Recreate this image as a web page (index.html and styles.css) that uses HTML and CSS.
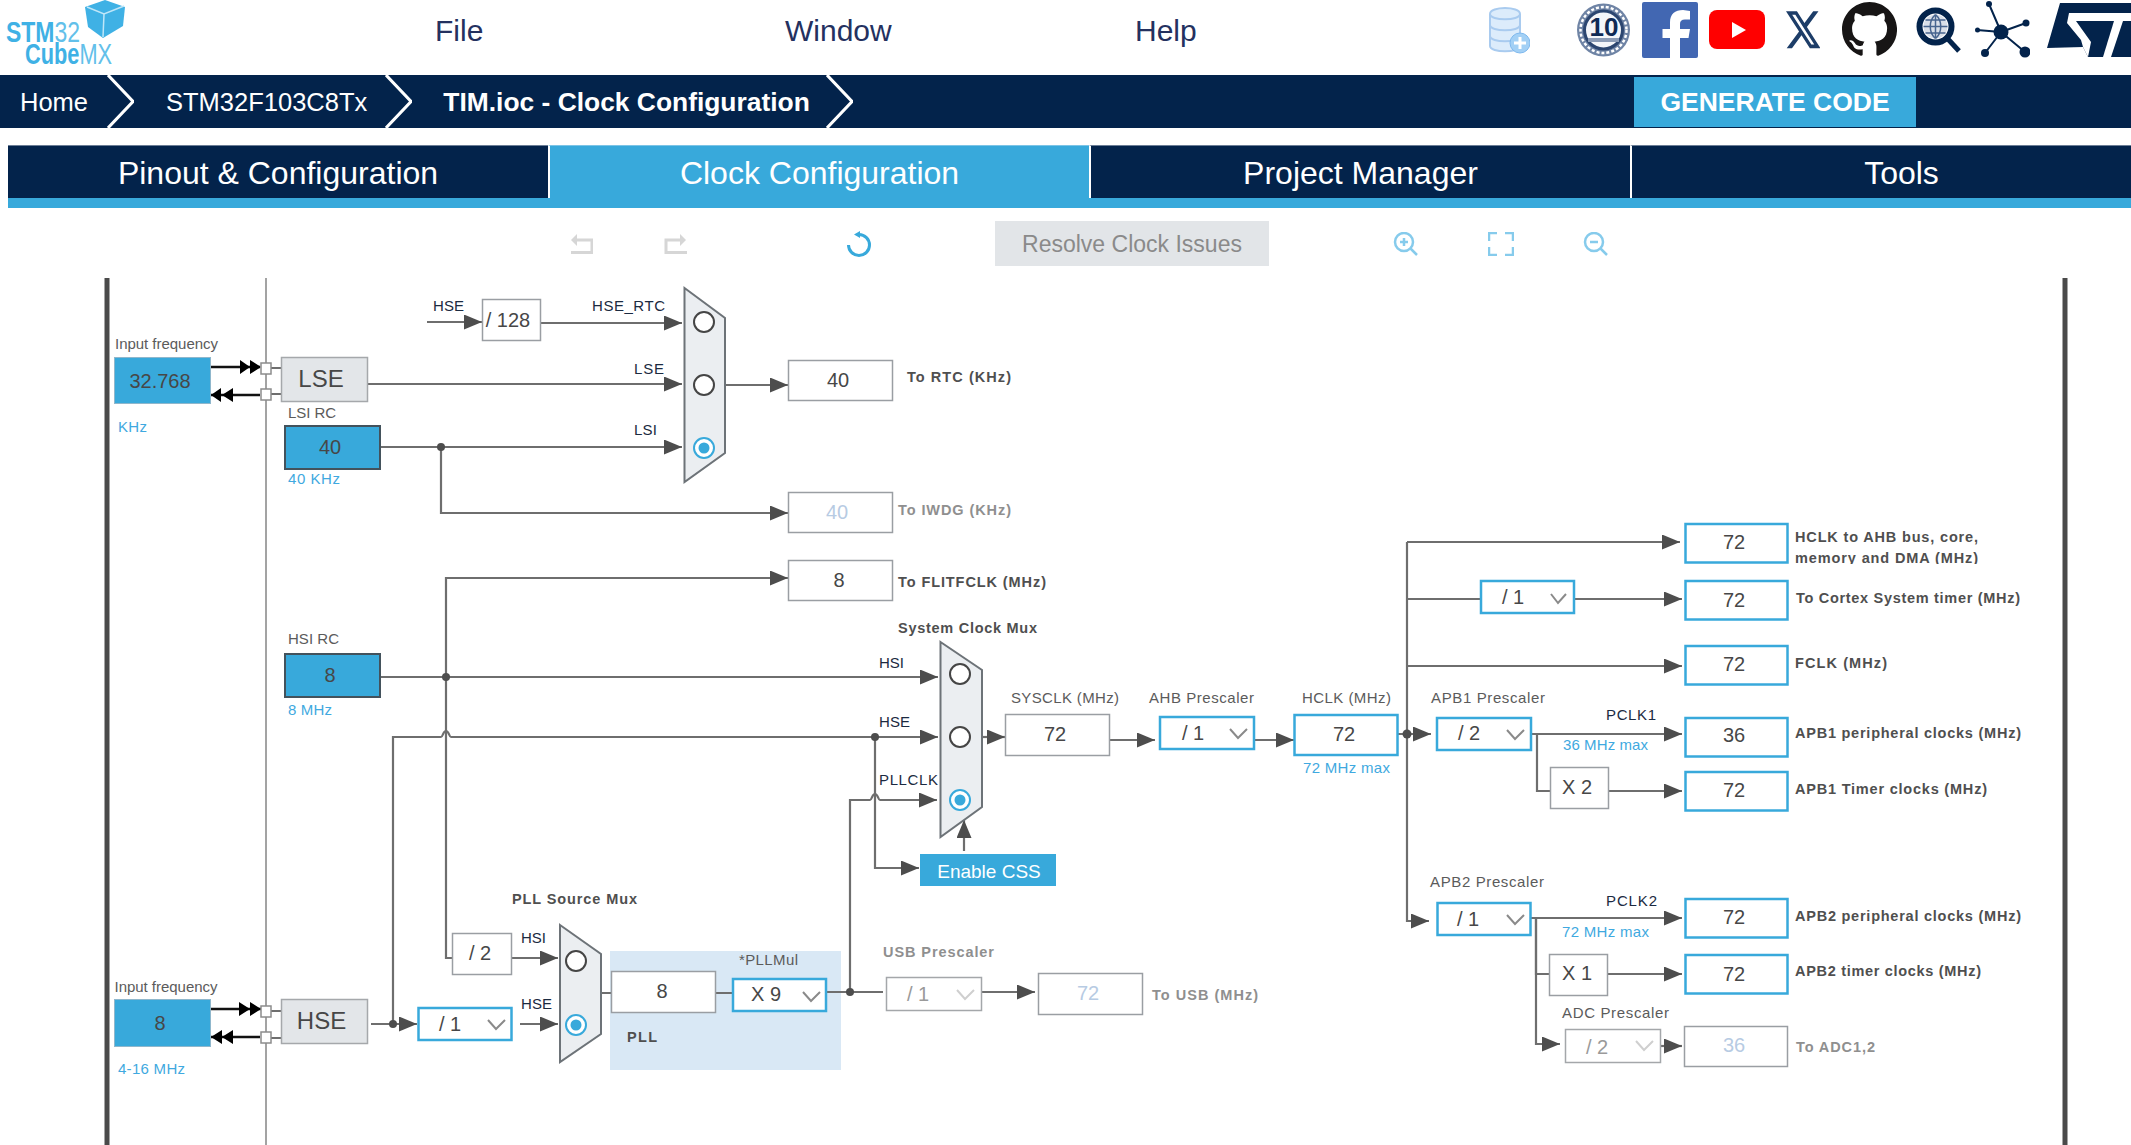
FILE: index.html
```html
<!DOCTYPE html>
<html lang="en">
<head>
<meta charset="utf-8">
<title>STM32CubeMX - Clock Configuration</title>
<link rel="stylesheet" href="styles.css">
</head>
<body>
<header class="top">
  <svg class="logo" width="125" height="75" viewBox="0 0 125 75">
    <path class="cube" d="M85 7L105 0L125 7L123 26L103 38L88 27z"/>
    <path class="cube-line" d="M87 7L104 14L124 6M104 14L103 37"/>
    <text class="logo-t" x="6" y="42" textLength="74" lengthAdjust="spacingAndGlyphs"><tspan class="logo-b">STM</tspan><tspan class="logo-l">32</tspan></text>
    <text class="logo-t" x="25" y="64" textLength="87" lengthAdjust="spacingAndGlyphs"><tspan class="logo-b">Cube</tspan><tspan class="logo-l">MX</tspan></text>
  </svg>
  <nav class="menu">
    <a class="menu-item">File</a>
    <a class="menu-item">Window</a>
    <a class="menu-item">Help</a>
  </nav>
  <div class="links">
    <svg class="link l-db" width="41" height="60" viewBox="0 0 41 60">
      <g class="db"><path d="M1 14c0-8 30-8 30 0v32c0 7-30 7-30 0z"/><path d="M1 14c0 7 30 7 30 0M1 25c0 7 30 7 30 0M1 36c0 7 30 7 30 0"/></g>
      <ellipse class="db-plus" cx="31" cy="43" rx="10" ry="10"/>
      <path class="db-cross" d="M31 37v12M25 43h12"/>
    </svg>
    <svg class="link l-badge" width="55" height="60" viewBox="0 0 55 60">
      <circle class="bd-o" cx="27.500" cy="30" r="26.500"/>
      <circle class="bd-d" cx="27.500" cy="30" r="23"/>
      <circle class="bd-i" cx="27.500" cy="30" r="19"/>
      <path class="bd-b" d="M12 38H43V42H12z"/>
      <text class="bd-t" x="28" y="36" text-anchor="middle">10</text>
    </svg>
    <svg class="link l-fb" width="56" height="60" viewBox="0 0 56 60">
      <rect class="fb" x="0" y="2" width="56" height="56" rx="2"/>
      <path class="wh" d="M48 11v8.500h-5c-3.500 0-5 1.500-5 4.500v5h10l-1.500 9h-8.500v20.500h-10v-20.500h-7.500v-9h7.500v-6.500c0-8.500 5-12.500 13-12.500z"/>
    </svg>
    <svg class="link l-yt" width="56" height="60" viewBox="0 0 56 60">
      <rect class="yt" x="0" y="10" width="56" height="39" rx="8"/>
      <path class="wh" d="M23 22l14 8l-14 8z"/>
    </svg>
    <svg class="link l-x" width="34" height="60" viewBox="0 0 34 60">
      <path class="x" transform="translate(-2 7) scale(1.6 1.9)" d="M18.244 2.25h3.308l-7.227 8.26 8.502 11.24H16.17l-5.214-6.817L4.990 21.750H1.680l7.730-8.835L1.254 2.250H8.080l4.713 6.231zm-1.161 17.520h1.833L7.084 4.126H5.117z"/>
    </svg>
    <svg class="link l-gh" width="55" height="60" viewBox="0 0 55 60">
      <path class="gh" transform="translate(0 2) scale(3.44)" d="M8 0C3.58 0 0 3.58 0 8c0 3.54 2.29 6.53 5.47 7.59.4.07.55-.17.55-.38 0-.19-.01-.82-.01-1.49-2.01.37-2.53-.49-2.69-.94-.09-.23-.48-.94-.82-1.13-.28-.15-.68-.52-.01-.53.63-.01 1.08.58 1.23.82.72 1.21 1.87.87 2.33.66.07-.52.28-.87.51-1.07-1.78-.2-3.64-.89-3.64-3.95 0-.87.31-1.59.82-2.15-.08-.2-.36-1.02.08-2.12 0 0 .67-.21 2.2.82.64-.18 1.32-.27 2-.27.68 0 1.360.09 2 .27 1.530-1.040 2.200-.820 2.200-.820.440 1.100.160 1.920.080 2.120.510.560.820 1.270.820 2.150 0 3.070-1.870 3.750-3.650 3.950.290.250.540.730.540 1.480 0 1.070-.010 1.930-.010 2.200 0 .210.150.460.550.380A8.013 8.013 0 0016 8c0-4.420-3.580-8-8-8z"/>
    </svg>
    <svg class="link l-gl" width="45" height="60" viewBox="0 0 45 60">
      <circle class="gl-f" cx="19.500" cy="26.500" r="12"/>
      <path class="gl-g" d="M7.500 26.500h24M9.500 20h20M9.500 33h20M19.500 14.500v24M19.500 14.500c-7 6-7 18 0 24M19.500 14.500c7 6 7 18 0 24"/>
      <circle class="gl-r" cx="19.500" cy="26.500" r="16"/>
      <path class="gl-h" d="M31 38l12 13"/>
    </svg>
    <svg class="link l-net" width="55" height="60" viewBox="0 0 55 60">
      <path class="net-l" d="M26 32L14 4M26 32L51 23M26 32L2 30M26 32L10 53M26 32L50 52"/>
      <circle class="navy" cx="26" cy="32" r="7.500"/>
      <circle class="navy" cx="14" cy="4" r="3"/>
      <circle class="navy" cx="51" cy="23" r="3.500"/>
      <circle class="navy" cx="2.500" cy="30" r="2.500"/>
      <circle class="navy" cx="10" cy="53" r="4"/>
      <circle class="navy" cx="50" cy="52" r="5.500"/>
    </svg>
    <svg class="link l-st" width="85" height="60" viewBox="0 0 85 60">
      <path class="navy" d="M14 3H85V57H42L37 47L1 48z"/>
      <path class="wh" d="M23 13H85V21H30L45 42L42 57L37 47L35 40L21 23z"/>
      <path class="wh" d="M68 21H77L65 57H57z"/>
    </svg>
  </div>
</header>

<div class="crumbs">
  <span class="crumb c-home">Home</span>
  <svg class="chev c1" width="27" height="53" viewBox="0 0 27 53"><path d="M1 0L26 26.500L1 53"/></svg>
  <span class="crumb c-chip">STM32F103C8Tx</span>
  <svg class="chev c2" width="27" height="53" viewBox="0 0 27 53"><path d="M1 0L26 26.500L1 53"/></svg>
  <span class="crumb c-file">TIM.ioc - Clock Configuration</span>
  <svg class="chev c3" width="27" height="53" viewBox="0 0 27 53"><path d="M1 0L26 26.500L1 53"/></svg>
  <button class="generate">GENERATE CODE</button>
</div>

<div class="tabs">
  <div class="tab">Pinout &amp; Configuration</div>
  <div class="tab tab-on">Clock Configuration</div>
  <div class="tab">Project Manager</div>
  <div class="tab">Tools</div>
</div>

<div class="toolbar">
  <svg class="t-undo" width="22" height="22" viewBox="0 0 22 22"><path class="ti-g" d="M5 7H21V19.500H0"/><path class="ti-gf" d="M6 1V13L0 7z"/></svg>
  <svg class="t-redo" width="23" height="22" viewBox="0 0 23 22"><path class="ti-g" d="M17 7H2V19.500H23"/><path class="ti-gf" d="M16 1V13L22 7z"/></svg>
  <svg class="t-ref" width="24" height="26" viewBox="0 0 24 26"><path class="ti-b" d="M12 2.500A10.500 10.500 0 1 1 1.500 13"/><path class="ti-bf" d="M13 -1V6L7 2.500z"/></svg>
  <button class="resolve">Resolve Clock Issues</button>
  <svg class="t-zin" width="25" height="24" viewBox="0 0 25 24"><circle class="ti-z" cx="11" cy="10" r="9"/><path class="ti-z" d="M17.500 16.500L24 23M11 6v8M7 10h8"/></svg>
  <svg class="t-fit" width="26" height="24" viewBox="0 0 26 24"><path class="ti-z" d="M1 9V1H9M17 1H25V9M25 15V23H17M9 23H1V15"/></svg>
  <svg class="t-zout" width="25" height="24" viewBox="0 0 25 24"><circle class="ti-z" cx="11" cy="10" r="9"/><path class="ti-z" d="M17.500 16.500L24 23M7 10h8"/></svg>
</div>

<svg class="tree" width="2131" height="867" viewBox="0 278 2131 867">
  <defs>
    <marker id="ah" markerUnits="userSpaceOnUse" markerWidth="18" markerHeight="15" refX="18" refY="7.500" orient="auto"><path d="M0 0L18 7.500L0 15z" fill="#4d4d4d"/></marker>
    <clipPath id="clip-hclk"><rect x="1790" y="520" width="220" height="44"/></clipPath>
  </defs>

  <path class="rail" d="M107 278V1145M2065 278V1145"/>
  <path class="thin" d="M266 278V1145"/>

  <rect class="pll" x="610" y="951" width="231" height="119"/>

  <g class="w">
    <path d="M271 368H281M271 394H281M271 1011H281M271 1038H281"/>
    <path d="M601 993H611M715 993H732M827 992H883M1407 599H1480M1537 734V791H1550M1536 918V974H1549"/>
  </g>
  <g class="w" marker-end="url(#ah)">
    <path d="M427 322H482"/>
    <path d="M540 323H682"/>
    <path d="M367 384H682"/>
    <path d="M380 447H682"/>
    <path d="M441 447V513H788"/>
    <path d="M725 385H788"/>
    <path d="M452 958H446V578H788"/>
    <path d="M380 677H938"/>
    <path d="M393 1024V737H441C443 737 443 731 446 731C449 731 449 737 451 737H938"/>
    <path d="M875 737V868H919"/>
    <path d="M850 992V800H870C872 800 872 794 875 794C878 794 878 800 880 800H937"/>
    <path d="M982 737H1005"/>
    <path d="M964 851V820"/>
    <path d="M1110 740H1155"/>
    <path d="M1255 740H1294"/>
    <path d="M1398 734H1431"/>
    <path d="M1407 542H1680"/>
    <path d="M1407 542V921H1429"/>
    <path d="M1575 599H1682"/>
    <path d="M1407 666H1682"/>
    <path d="M1532 734H1682"/>
    <path d="M1608 791H1682"/>
    <path d="M1531 918H1682"/>
    <path d="M1536 918V1044H1560"/>
    <path d="M1608 974H1682"/>
    <path d="M1661 1046H1682"/>
    <path d="M981 992H1035"/>
    <path d="M511 958H558"/>
    <path d="M520 1024H558"/>
    <path d="M371 1024H417"/>
  </g>
  <g class="dots">
    <circle cx="441" cy="447" r="4"/>
    <circle cx="446" cy="677" r="4"/>
    <circle cx="875" cy="737" r="4"/>
    <circle cx="393" cy="1024" r="4"/>
    <circle cx="850" cy="992" r="4"/>
    <circle cx="1407" cy="734" r="4.500"/>
  </g>

  <!-- external pins -->
  <g class="bk">
    <path d="M211 367H260M211 395H260M211 1009H261M211 1037H260"/>
  </g>
  <g class="bkf">
    <path d="M240 360L250 367L240 374zM250 360L261 367L250 374z"/>
    <path d="M221 388L211 395L221 402zM233 388L222 395L233 402z"/>
    <path d="M239 1002L250 1009L239 1016zM250 1002L261 1009L250 1016z"/>
    <path d="M222 1030L211 1037L222 1044zM233 1030L222 1037L233 1044z"/>
  </g>
  <g class="pin">
    <rect x="261" y="363" width="10" height="11"/>
    <rect x="261" y="389" width="10" height="11"/>
    <rect x="261" y="1006" width="10" height="11"/>
    <rect x="261" y="1032" width="10" height="11"/>
  </g>

  <!-- muxes -->
  <g class="mux">
    <path d="M684.500 288L725 318V453L684.500 482z"/>
    <path d="M940.500 642L982 670V807L940.500 837z"/>
    <path d="M560 925L601 954V1034L560 1062z"/>
  </g>
  <g class="rad">
    <circle cx="704" cy="322" r="10"/>
    <circle cx="704" cy="385" r="10"/>
    <circle cx="960" cy="674" r="10"/>
    <circle cx="960" cy="737" r="10"/>
    <circle cx="576" cy="961" r="10"/>
  </g>
  <g class="rad-on">
    <circle cx="704" cy="448" r="10"/>
    <circle cx="960" cy="800" r="10"/>
    <circle cx="576" cy="1025" r="10"/>
  </g>
  <g class="rad-dot">
    <circle cx="704" cy="448" r="5.500"/>
    <circle cx="960" cy="800" r="5.500"/>
    <circle cx="576" cy="1025" r="5.500"/>
  </g>

  <!-- source boxes -->
  <rect class="src" x="114.500" y="357.500" width="96" height="46"/>
  <rect class="src" x="114.500" y="999.500" width="96" height="47"/>
  <rect class="src-d" x="285" y="426" width="95" height="43"/>
  <rect class="src-d" x="285" y="654" width="95" height="43"/>
  <rect class="osc" x="281.500" y="357.500" width="86" height="44"/>
  <rect class="osc" x="281.500" y="999.500" width="86" height="44"/>
  <rect class="css" x="920" y="854" width="136" height="32"/>

  <!-- plain boxes -->
  <g class="box">
    <rect x="482.500" y="299.500" width="58" height="41"/>
    <rect x="788.500" y="360.500" width="104" height="40"/>
    <rect x="788.500" y="492.500" width="104" height="40"/>
    <rect x="788.500" y="560.500" width="104" height="40"/>
    <rect x="1005.500" y="714.500" width="104" height="41"/>
    <rect x="1550.500" y="767.500" width="58" height="41"/>
    <rect x="1549.500" y="954.500" width="58" height="41"/>
    <rect x="452.500" y="933.500" width="59" height="41"/>
    <rect x="611.500" y="971.500" width="104" height="41"/>
    <rect x="1038.500" y="973.500" width="104" height="41"/>
    <rect x="1684.500" y="1026.500" width="103" height="40"/>
  </g>
  <g class="sel-off">
    <rect x="886.500" y="977.500" width="95" height="33"/>
    <rect x="1565.500" y="1029.500" width="95" height="33"/>
  </g>
  <g class="hi">
    <rect x="1294.500" y="715" width="103" height="40"/>
    <rect x="1685.500" y="524" width="102" height="38.500"/>
    <rect x="1685.500" y="581" width="102" height="38.500"/>
    <rect x="1685.500" y="646" width="102" height="38.500"/>
    <rect x="1685.500" y="718" width="102" height="38.500"/>
    <rect x="1685.500" y="772" width="102" height="38.500"/>
    <rect x="1685.500" y="899" width="102" height="38.500"/>
    <rect x="1685.500" y="955" width="102" height="38.500"/>
    <rect x="1160" y="717" width="94" height="32"/>
    <rect x="1437" y="718" width="94" height="32"/>
    <rect x="1481" y="581" width="93" height="32"/>
    <rect x="1437.500" y="903" width="93" height="32"/>
    <rect x="418.500" y="1008" width="93" height="32"/>
    <rect x="733" y="979" width="93" height="32"/>
  </g>
  <g class="chv">
    <path d="M1230 729L1238 738L1247 729"/>
    <path d="M1507 730L1515 739L1524 730"/>
    <path d="M1551 594L1558 603L1566 594"/>
    <path d="M1507 915L1515 924L1524 915"/>
    <path d="M488 1020L496 1029L505 1020"/>
    <path d="M803 992L811 1001L820 992"/>
  </g>
  <g class="chv-off">
    <path d="M957 990L965 999L974 990"/>
    <path d="M1636 1041L1644 1050L1653 1041"/>
  </g>

  <!-- values -->
  <g class="val">
    <text x="160" y="388">32.768</text>
    <text x="330" y="454">40</text>
    <text x="330" y="682">8</text>
    <text x="160" y="1030">8</text>
    <text class="big" x="321" y="387">LSE</text>
    <text class="big" x="321.500" y="1029">HSE</text>
    <text x="508" y="327">/ 128</text>
    <text x="838" y="387">40</text>
    <text x="839" y="587">8</text>
    <text x="1055" y="741">72</text>
    <text x="1344" y="741">72</text>
    <text x="1193" y="740">/ 1</text>
    <text x="1469" y="740">/ 2</text>
    <text x="1513" y="604">/ 1</text>
    <text x="1468" y="926">/ 1</text>
    <text x="1577" y="794">X 2</text>
    <text x="1577" y="980">X 1</text>
    <text x="480" y="960">/ 2</text>
    <text x="450" y="1031">/ 1</text>
    <text x="662" y="998">8</text>
    <text x="766" y="1001">X 9</text>
    <text x="1734" y="549">72</text>
    <text x="1734" y="607">72</text>
    <text x="1734" y="671">72</text>
    <text x="1734" y="742">36</text>
    <text x="1734" y="797">72</text>
    <text x="1734" y="924">72</text>
    <text x="1734" y="981">72</text>
  </g>
  <g class="val-off">
    <text x="837" y="519">40</text>
    <text x="1088" y="1000">72</text>
    <text x="1734" y="1052">36</text>
  </g>
  <g class="val-dis">
    <text x="918" y="1001">/ 1</text>
    <text x="1597" y="1054">/ 2</text>
  </g>
  <text class="css-t" x="989" y="878">Enable CSS</text>

  <!-- plain captions -->
  <g class="lbl">
    <text x="115" y="349" textLength="103">Input frequency</text>
    <text x="114.500" y="992" textLength="103">Input frequency</text>
    <text x="288" y="418" textLength="48">LSI RC</text>
    <text x="288" y="644" textLength="51">HSI RC</text>
    <text x="1011" y="703" textLength="108">SYSCLK (MHz)</text>
    <text x="1149" y="703" textLength="105">AHB Prescaler</text>
    <text x="1302" y="703" textLength="89">HCLK (MHz)</text>
    <text x="1431" y="703" textLength="114">APB1 Prescaler</text>
    <text x="1430" y="887" textLength="114">APB2 Prescaler</text>
    <text x="1562" y="1018" textLength="107">ADC Prescaler</text>
    <text x="739" y="965" textLength="59">*PLLMul</text>
  </g>
  <g class="sig">
    <text x="433" y="311" textLength="31">HSE</text>
    <text x="592" y="311" textLength="73">HSE_RTC</text>
    <text x="634" y="374" textLength="30">LSE</text>
    <text x="634" y="435" textLength="23">LSI</text>
    <text x="879" y="668" textLength="25">HSI</text>
    <text x="879" y="727" textLength="31">HSE</text>
    <text x="879" y="785" textLength="59">PLLCLK</text>
    <text x="521" y="943" textLength="25">HSI</text>
    <text x="521" y="1009" textLength="31">HSE</text>
    <text x="1606" y="720" textLength="50">PCLK1</text>
    <text x="1606" y="906" textLength="51">PCLK2</text>
  </g>
  <g class="hint">
    <text x="118" y="432" textLength="29">KHz</text>
    <text x="288" y="484" textLength="52">40 KHz</text>
    <text x="288" y="715" textLength="44">8 MHz</text>
    <text x="118" y="1074" textLength="67">4-16 MHz</text>
    <text x="1303" y="773" textLength="87">72 MHz max</text>
    <text x="1563" y="750" textLength="85">36 MHz max</text>
    <text x="1562" y="937" textLength="87">72 MHz max</text>
  </g>
  <g class="bold">
    <text x="907" y="382" textLength="104">To RTC (KHz)</text>
    <text x="898" y="587" textLength="148">To FLITFCLK (MHz)</text>
    <text x="898" y="633" textLength="139">System Clock Mux</text>
    <text x="512" y="904" textLength="125">PLL Source Mux</text>
    <text x="627" y="1042" textLength="30">PLL</text>
    <text x="1795" y="542" textLength="183">HCLK to AHB bus, core,</text>
    <text x="1795" y="563" textLength="183" clip-path="url(#clip-hclk)">memory and DMA (MHz)</text>
    <text x="1796" y="603" textLength="224">To Cortex System timer (MHz)</text>
    <text x="1795" y="668" textLength="92">FCLK (MHz)</text>
    <text x="1795" y="738" textLength="226">APB1 peripheral clocks (MHz)</text>
    <text x="1795" y="794" textLength="192">APB1 Timer clocks (MHz)</text>
    <text x="1795" y="921" textLength="226">APB2 peripheral clocks (MHz)</text>
    <text x="1795" y="976" textLength="186">APB2 timer clocks (MHz)</text>
  </g>
  <g class="bold-off">
    <text x="898" y="515" textLength="113">To IWDG (KHz)</text>
    <text x="883" y="957" textLength="111">USB Prescaler</text>
    <text x="1152" y="1000" textLength="106">To USB (MHz)</text>
    <text x="1796" y="1052" textLength="79">To ADC1,2</text>
  </g>
</svg>
</body>
</html>
```
FILE: styles.css
```css
html, body {
  margin: 0;
  padding: 0;
  height: 1145px;
  overflow: hidden;
  background: #fff;
  font-family: "Liberation Sans", Arial, sans-serif;
}
svg { display: block; flex: none; }

/* header */
.top {
  display: flex;
  height: 75px;
  overflow: hidden;
}
.cube { fill: #3fb1e5; }
.cube-line { fill: none; stroke: #bfe6f8; stroke-width: 1.5; }
.logo-t { font-family: "Liberation Sans", sans-serif; font-size: 29px; }
.logo-b { font-weight: bold; fill: #3fb1e5; }
.logo-l { fill: #62c0ea; }
.menu {
  display: flex;
  margin-left: 310px;
}
.menu-item {
  width: 350px;
  font-size: 30px;
  line-height: 62px;
  color: #24315f;
}
.links {
  display: flex;
  position: absolute;
  left: 1489px;
  top: 0;
}
.l-badge { margin-left: 46px; }
.l-fb { margin-left: 11px; }
.l-yt { margin-left: 11px; }
.l-x { margin-left: 21px; }
.l-gh { margin-left: 22px; }
.l-gl { margin-left: 19px; }
.l-net { margin-left: 14px; }
.l-st { margin-left: 16px; }
.db path { fill: #dcecfb; stroke: #a9cbef; stroke-width: 2; }
.db-plus { fill: #a3d0f5; stroke: #7fb9ee; stroke-width: 1; }
.db-cross { stroke: #fff; stroke-width: 3; fill: none; }
.bd-o { fill: #6f84a5; }
.bd-d { fill: none; stroke: #fff; stroke-width: 2.500; stroke-dasharray: 3 2; }
.bd-i { fill: #f4f6f9; stroke: #2c4670; stroke-width: 3; }
.bd-b { fill: #8c9cb6; }
.bd-t { font: bold 26px "Liberation Sans", sans-serif; fill: #0f2a55; }
.fb { fill: #4267b2; }
.yt { fill: #ff0000; }
.wh { fill: #fff; }
.x { fill: #1d3d68; }
.gh { fill: #171515; }
.gl-f { fill: #d9dfe8; }
.gl-g { fill: none; stroke: #48658f; stroke-width: 1.5; }
.gl-r { fill: none; stroke: #03234b; stroke-width: 6; }
.gl-h { fill: none; stroke: #03234b; stroke-width: 5; }
.net-l { fill: none; stroke: #03234b; stroke-width: 2; }
.navy { fill: #03234b; }

/* breadcrumb */
.crumbs {
  display: flex;
  align-items: center;
  height: 53px;
  background: #03234b;
  color: #fff;
}
.crumb { font-size: 25.500px; white-space: nowrap; padding-top: 2px; }
.c-home { margin-left: 20px; }
.chev path { fill: none; stroke: #fff; stroke-width: 3; }
.c1 { margin-left: 19px; }
.c-chip { margin-left: 32px; }
.c2 { margin-left: 18px; }
.c-file { margin-left: 31px; font-weight: bold; font-size: 26.400px; }
.c3 { margin-left: 16px; }
.generate {
  margin-left: auto;
  margin-right: 215px;
  width: 282px;
  height: 50px;
  border: 0;
  padding: 2px 0 0;
  background: #38a9db;
  color: #fff;
  font: bold 26.500px "Liberation Sans", sans-serif;
}

/* tabs */
.tabs {
  display: grid;
  grid-template-columns: 540px 541px 541px 541px;
  margin: 17px 0 0 8px;
  border-bottom: 10px solid #38a9db;
}
.tab {
  height: 52px;
  border-top: 1px solid #6b7d95;
  border-left: 2px solid #fff;
  background: #03234b;
  color: #fff;
  font-size: 32px;
  line-height: 55px;
  text-align: center;
}
.tab:first-child { border-left: 0; }
.tab-on { background: #38a9db; border-top-color: #7cc4e6; }

/* toolbar */
.toolbar {
  display: flex;
  align-items: flex-start;
  height: 70px;
  padding: 25px 0 0 571px;
  box-sizing: border-box;
}
.ti-g { fill: none; stroke: #d6d6d6; stroke-width: 3; }
.ti-gf { fill: #d6d6d6; }
.ti-b { fill: none; stroke: #38a9db; stroke-width: 3; }
.ti-bf { fill: #38a9db; }
.ti-z { fill: none; stroke: #86cbec; stroke-width: 2.500; }
.t-redo { margin-left: 71px; }
.t-ref { margin: -1px 0 0 160px; overflow: visible; }
.resolve {
  margin: -12px 0 0 124px;
  width: 274px;
  height: 45px;
  border: 0;
  padding: 2px 0 0;
  background: #e2e5e8;
  color: #8a8a8a;
  font: 23px "Liberation Sans", sans-serif;
}
.t-zin { margin: -1px 0 0 124px; }
.t-fit { margin: -1px 0 0 70px; }
.t-zout { margin: -1px 0 0 69px; }

/* clock tree */
.rail { stroke: #4a4a4a; stroke-width: 5; fill: none; }
.thin { stroke: #858585; stroke-width: 1.500; fill: none; }
.pll { fill: #d9e8f5; }
.w { fill: none; stroke: #6e6e6e; stroke-width: 2.200; }
.dots { fill: #4d4d4d; }
.bk { fill: none; stroke: #111; stroke-width: 2.500; }
.bkf { fill: #000; }
.pin rect { fill: #fff; stroke: #8c8c8c; stroke-width: 1.500; }
.mux path { fill: #ebeef1; stroke: #6d7378; stroke-width: 2; }
.rad circle { fill: #fff; stroke: #454545; stroke-width: 2; }
.rad-on circle { fill: #fff; stroke: #38a9db; stroke-width: 2; }
.rad-dot { fill: #38a9db; }
.src { fill: #38a9db; stroke: #8fb7cc; stroke-width: 1; }
.src-d { fill: #38a9db; stroke: #43525c; stroke-width: 2; }
.osc { fill: #e3e6e9; stroke: #a5a8ab; stroke-width: 1.500; }
.css { fill: #38a9db; }
.box rect { fill: #fff; stroke: #9a9ea3; stroke-width: 1.500; }
.sel-off rect { fill: #fff; stroke: #a4a7aa; stroke-width: 1.500; }
.hi rect { fill: #fff; stroke: #38a9db; stroke-width: 2.500; }
.chv path { fill: none; stroke: #8a8a8a; stroke-width: 2; }
.chv-off path { fill: none; stroke: #cfcfcf; stroke-width: 2; }

.val text, .val-off text, .val-dis text, .css-t {
  font-family: "Liberation Sans", sans-serif;
  font-size: 20px;
  text-anchor: middle;
}
.val { fill: #474747; }
.val .big { font-size: 24px; }
.val-off { fill: #b7cbe3; }
.val-dis { fill: #9a9a9a; }
.css-t { fill: #fff; font-size: 19px; }
.lbl, .sig, .hint, .bold, .bold-off { font-family: "Liberation Sans", sans-serif; }
.lbl { font-size: 15px; fill: #5b5b5b; }
.sig { font-size: 15px; fill: #1b2a41; }
.hint { font-size: 15px; fill: #3fa9e0; }
.bold { font-size: 14.500px; font-weight: bold; fill: #4f4f4f; }
.bold-off { font-size: 14.500px; font-weight: bold; fill: #8f8f8f; }
```
